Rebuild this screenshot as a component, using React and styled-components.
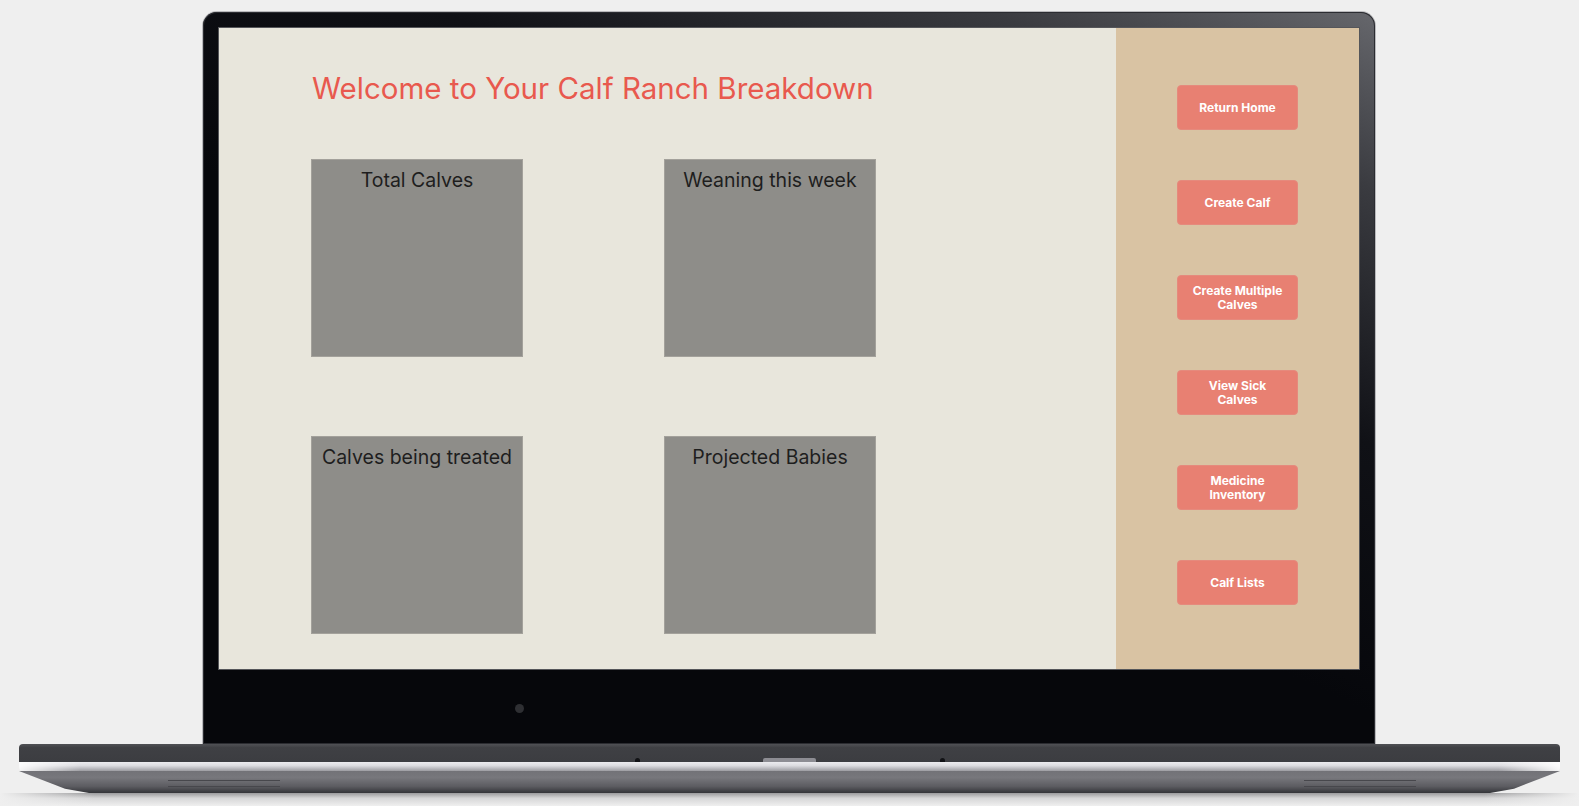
import React from "react";
import styled, { createGlobalStyle } from "styled-components";

const GlobalStyle = createGlobalStyle`
  html, body {
    margin: 0;
    padding: 0;
    background: #efefef;
    font-family: Inter, "Noto Sans", sans-serif;
  }
`;

const Page = styled.div`
  display: flex;
  flex-direction: column;
  align-items: center;
  padding-top: 12px;
  width: 1579px;
  height: 806px;
  box-sizing: border-box;
  overflow: hidden;
`;

const Lid = styled.div`
  width: 1172px;
  height: 734px;
  margin-left: -2px;
  box-sizing: border-box;
  padding: 16px 15px 0 16px;
  border-radius: 14px 14px 0 0;
  background: linear-gradient(205deg, #66676c 0%, #3a3b40 14%, #101116 34%, #06070b 55%);
  box-shadow: inset 0 0 0 1px #2b2c31, 0 0 0 1px #b9b9bc;
  display: flex;
  flex-direction: column;
  align-items: center;
`;

const Screen = styled.div`
  width: 1140px;
  height: 641px;
  display: grid;
  grid-template-columns: 897px 243px;
  background: #e8e6dc;
  box-shadow: 0 0 0 1px #55565a;
`;

const Camera = styled.div`
  width: 9px;
  height: 9px;
  border-radius: 50%;
  background: #2e2f33;
  margin-top: 35px;
  margin-right: 540px;
`;

const Main = styled.main`
  padding: 42px 0 0 93px;
`;

const Title = styled.h1`
  margin: 0 0 53px;
  font-size: 29.5px;
  line-height: 36px;
  font-weight: 400;
  color: #e8594e;
`;

const CardGrid = styled.div`
  display: grid;
  grid-template-columns: repeat(2, 212px);
  grid-auto-rows: 198px;
  column-gap: 141px;
  row-gap: 79px;
  margin-left: -1px;
`;

const Card = styled.div`
  background: #8e8d89;
  outline: 1px solid #a3a19b;
  outline-offset: -1px;
  padding-top: 9px;
  text-align: center;
  font-size: 19.5px;
  line-height: 24px;
  color: #1e1e1e;
`;

const Sidebar = styled.aside`
  background: #d9c3a3;
  display: flex;
  flex-direction: column;
  align-items: center;
  gap: 50px;
  padding-top: 57px;
`;

const NavButton = styled.button`
  width: 121px;
  height: 45px;
  border: 1px solid #e58a7d;
  border-radius: 4px;
  background: #e88072;
  color: #fff;
  font-family: Inter, sans-serif;
  font-weight: 700;
  font-size: 12px;
  line-height: 14px;
  padding: 0 14px;
`;

const Base = styled.div`
  width: 1541px;
  display: flex;
  flex-direction: column;
`;

const BaseTop = styled.div`
  height: 18px;
  border-radius: 4px 4px 0 0;
  background: linear-gradient(180deg, #505155 0%, #3f4044 20%, #3c3d41 100%);
  display: flex;
  align-items: flex-end;
  justify-content: center;
  position: relative;
`;

const Notch = styled.div`
  width: 53px;
  height: 4px;
  background: #8d8d93;
  border-radius: 2px 2px 0 0;
`;

const Dot = styled.span`
  position: absolute;
  bottom: 0;
  left: ${(p) => p.x}px;
  width: 5px;
  height: 4px;
  border-radius: 3px 3px 0 0;
  background: #111215;
`;

const BaseStrip = styled.div`
  height: 9px;
  border-radius: 0 0 4px 4px;
  background:
    linear-gradient(90deg, rgba(255, 255, 255, 0.9) 0%, rgba(255, 255, 255, 0) 4%, rgba(255, 255, 255, 0) 96%, rgba(255, 255, 255, 0.9) 100%),
    linear-gradient(180deg, #ececef 0%, #dcdce0 40%, #9c9ca1 100%);
`;

const BaseBottom = styled.div`
  height: 22px;
  background: linear-gradient(180deg, #727277 0%, #77777c 30%, #5c5c61 70%, #333438 100%);
  clip-path: polygon(0 0, 100% 0, calc(100% - 46px) 80%, calc(100% - 70px) 100%, 70px 100%, 46px 80%);
  display: flex;
  justify-content: space-between;
  padding: 9px 144px 0 149px;
  box-sizing: border-box;
`;

const Vent = styled.div`
  width: 112px;
  display: flex;
  flex-direction: column;
  gap: 5px;
  & > span {
    display: block;
    height: 1px;
    background: #47474c;
  }
`;

const Floor = styled.div`
  width: 1579px;
  height: 13px;
  background:
    linear-gradient(90deg, #efefef 0%, rgba(239, 239, 239, 0) 6%, rgba(239, 239, 239, 0) 94%, #efefef 100%),
    linear-gradient(180deg, #9a9a9c 0%, #d6d6d7 40%, #efefef 100%);
`;

const buttons = [
  "Return Home",
  "Create Calf",
  "Create Multiple Calves",
  "View Sick Calves",
  "Medicine Inventory",
  "Calf Lists",
];

const cards = [
  "Total Calves",
  "Weaning this week",
  "Calves being treated",
  "Projected Babies",
];

export default function App() {
  return (
    <>
      <GlobalStyle />
      <Page>
        <Lid>
          <Screen>
            <Main>
              <Title>Welcome to Your Calf Ranch Breakdown</Title>
              <CardGrid>
                {cards.map((c) => (
                  <Card key={c}>{c}</Card>
                ))}
              </CardGrid>
            </Main>
            <Sidebar>
              {buttons.map((b) => (
                <NavButton key={b}>{b}</NavButton>
              ))}
            </Sidebar>
          </Screen>
          <Camera />
        </Lid>
        <Base>
          <BaseTop>
            <Dot x={616} />
            <Notch />
            <Dot x={921} />
          </BaseTop>
          <BaseStrip />
          <BaseBottom>
            <Vent>
              <span />
              <span />
            </Vent>
            <Vent>
              <span />
              <span />
            </Vent>
          </BaseBottom>
        </Base>
        <Floor />
      </Page>
    </>
  );
}
